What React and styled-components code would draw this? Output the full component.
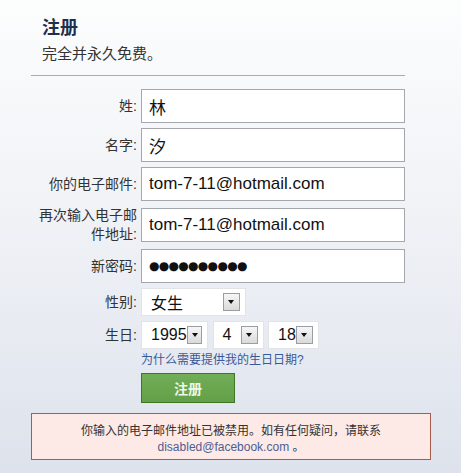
import styled, { createGlobalStyle } from 'styled-components';

const GlobalStyle = createGlobalStyle`
html, body {
    margin: 0;
    padding: 0;
}
body {
    min-height: 100vh;
    background: linear-gradient(180deg, #fcfdfd 0%, #f0f2f6 45%, #dde2ec 100%);
    font-family: "Liberation Sans", "Noto Sans CJK SC", sans-serif;
    color: #333;
}
`;

const fields = [
    { label: '姓:', value: '林' },
    { label: '名字:', value: '汐' },
    { label: '你的电子邮件:', value: 'tom-7-11@hotmail.com' },
    { label: '再次输入电子邮件地址:', value: 'tom-7-11@hotmail.com' },
    { label: '新密码:', value: '●●●●●●●●●●', password: true },
];

function Select({ value, width }) {
    return (
        <SelectBox $width={width}>
            <SelectValue>{value}</SelectValue>
            <ArrowButton />
        </SelectBox>
    );
}

export default function App() {
    return (
        <>
            <GlobalStyle />
            <Page>
                <Header>
                    <h2>注册</h2>
                    <span>完全并永久免费。</span>
                </Header>
                <Divider />

                <Form>
                    {fields.map((f) => (
                        <Row key={f.label}>
                            <Label>{f.label}</Label>
                            <TextInput
                                readOnly
                                value={f.value}
                                $password={f.password}
                            />
                        </Row>
                    ))}

                    <Row $short>
                        <Label>性别:</Label>
                        <Select value="女生" width={105} />
                    </Row>

                    <Row $short>
                        <Label>生日:</Label>
                        <Birthday>
                            <Select value="1995" width={67} />
                            <Select value="4" width={51} />
                            <Select value="18" width={51} />
                        </Birthday>
                    </Row>

                    <Row $auto>
                        <span />
                        <WhyLink href="#">为什么需要提供我的生日日期?</WhyLink>
                    </Row>

                    <Row $auto>
                        <span />
                        <SubmitButton type="button">注册</SubmitButton>
                    </Row>
                </Form>

                <ErrorBox>
                    你输入的电子邮件地址已被禁用。如有任何疑问，请联系
                    <br />
                    <a href="#">disabled@facebook.com</a> 。
                </ErrorBox>
            </Page>
        </>
    );
}

const Page = styled.div`
width: 461px;
padding-top: 16px;
`;

const Header = styled.div`
display: flex;
flex-direction: column;
padding-left: 42px;
    h2 {
        margin: 0;
        font-size: 18px;
        line-height: 24px;
        font-weight: bold;
        color: #1f2f4d;
    }
    span {
        margin-top: 4px;
        font-size: 15px;
        line-height: 20px;
        color: #333;
    }
`;

const Divider = styled.hr`
width: 374px;
margin: 11px 0 0 31px;
border: none;
border-top: 1px solid #a9abae;
`;

const Form = styled.div`
display: flex;
flex-direction: column;
gap: 5px;
margin-top: 13px;
padding-left: 37px;
`;

const Row = styled.div`
display: grid;
grid-template-columns: 100px auto;
column-gap: 4px;
align-items: center;
min-height: ${(p) => (p.$auto ? 'auto' : p.$short ? '28px' : '34px')};
`;

const Label = styled.label`
text-align: right;
font-size: 14px;
line-height: 19px;
color: #333;
`;

const TextInput = styled.input`
box-sizing: border-box;
width: 264px;
height: 34px;
padding: 0 7px;
border: 1px solid #a4a7ab;
background: #fff;
font-family: ${(p) => (p.$password ? '"DejaVu Sans", sans-serif' : '"Liberation Sans", "Noto Sans CJK SC", sans-serif')};
font-size: ${(p) => (p.$password ? '12px' : '17px')};
letter-spacing: ${(p) => (p.$password ? '-0.7px' : '0')};
color: #111;
outline: none;
`;

const Birthday = styled.div`
display: flex;
gap: 4.5px;
`;

const SelectBox = styled.div`
box-sizing: border-box;
display: flex;
align-items: center;
justify-content: space-between;
width: ${(p) => p.$width}px;
height: 28px;
padding: 0 5px 0 9px;
background: #fff;
border: 1px solid #e1e3e7;
`;

const SelectValue = styled.span`
font-size: 16px;
color: #111;
`;

const ArrowButton = styled.span`
position: relative;
box-sizing: border-box;
width: 17px;
height: 18px;
border: 1px solid #9a9da3;
background: linear-gradient(180deg, #f6f6f6 0%, #dadada 100%);
    &::after {
        content: '';
        position: absolute;
        left: 4px;
        top: 6px;
        border-left: 3.5px solid transparent;
        border-right: 3.5px solid transparent;
        border-top: 4px solid #111;
    }
`;

const WhyLink = styled.a`
margin-top: -2px;
font-size: 12px;
line-height: 16px;
color: #3b5998;
text-decoration: none;
`;

const SubmitButton = styled.button`
width: 94px;
height: 30px;
margin-top: 0;
border: 1px solid #3e7527;
background: linear-gradient(180deg, #72ad58 0%, #62a046 100%);
font-family: "Liberation Sans", "Noto Sans CJK SC", sans-serif;
font-size: 14px;
font-weight: bold;
color: #eef8e6;
cursor: pointer;
justify-self: start;
`;

const ErrorBox = styled.div`
box-sizing: border-box;
width: 400px;
height: 47px;
margin: 10px 0 0 31px;
padding-top: 9px;
background: #fde9e6;
border: 1px solid #a85c4b;
text-align: center;
font-size: 12px;
line-height: 16px;
color: #333;
    a {
        color: #4c5f94;
        text-decoration: none;
    }
`;
